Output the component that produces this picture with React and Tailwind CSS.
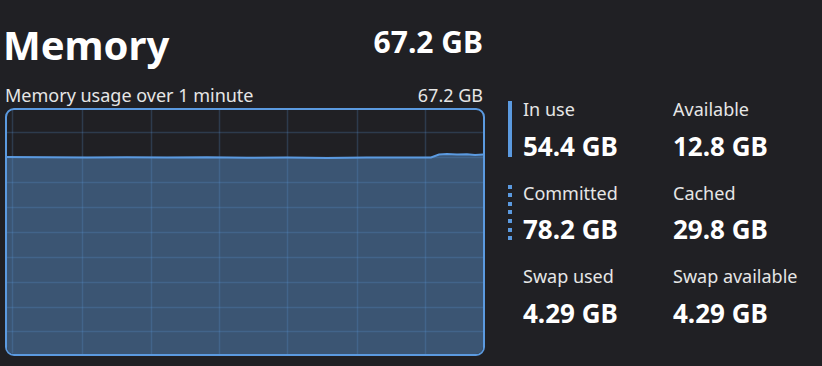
import React from 'react';

const FONT = { fontFamily: '"Noto Sans", "Open Sans", sans-serif' };

// memory history, inner chart coordinates (476 x 244)
const LINE = [
  [0, 47], [40, 47.2], [80, 47.5], [120, 47.3], [160, 47.6], [200, 47.2], [240, 47.8],
  [280, 47.5], [320, 47.9], [360, 47.6], [400, 47.6], [424, 47.4], [432, 44.5],
  [440, 44], [450, 44.6], [460, 44.2], [468, 45], [476, 44.6],
];

const Chart = () => {
  const pts = LINE.map(([x, y]) => `${x},${y}`).join(' L');
  const vLines = [5, 75, 144, 212, 280, 350, 418];
  const hLines = [22, 47, 72, 97, 122, 147, 172, 197, 221];
  return (
    <div className="mt-[4px] w-[480px] h-[248px] border-2 border-[#5b9ae0] rounded-[9px] overflow-hidden">
      <svg width="476" height="244" viewBox="0 0 476 244" className="block">
        <path d={`M${pts} L476,244 L0,244 Z`} fill="#3b5573" />
        {vLines.map((x) => (
          <line key={`v${x}`} x1={x + 0.5} y1="0" x2={x + 0.5} y2="244" stroke="#5b9ae0" strokeOpacity="0.22" strokeWidth="1.5" />
        ))}
        {hLines.map((y) => (
          <line key={`h${y}`} x1="0" y1={y + 0.5} x2="476" y2={y + 0.5} stroke="#5b9ae0" strokeOpacity="0.22" strokeWidth="1.5" />
        ))}
        <path d={`M${pts}`} fill="none" stroke="#5b9ae0" strokeWidth="2" />
      </svg>
    </div>
  );
};

const Stat = ({ label, value, marker }) => (
  <div className="flex">
    <div className="w-[15px] shrink-0 pt-[4px]">
      {marker === 'solid' && <div className="w-[4px] h-[56px] bg-[#5b9ae0]" />}
      {marker === 'dotted' && (
        <div className="flex flex-col justify-between h-[56px]">
          {[0, 1, 2, 3, 4, 5, 6].map((i) => (
            <div key={i} className="w-[4px] h-[4px] bg-[#5b9ae0]" />
          ))}
        </div>
      )}
    </div>
    <div className="flex flex-col">
      <span className="text-[18px] leading-[24px] text-[#e6e6e6]">{label}</span>
      <span className="text-[26px] leading-[30px] font-bold text-white mt-[9.5px]">{value}</span>
    </div>
  </div>
);

export default function App() {
  return (
    <div className="w-[822px] h-[366px] bg-[#202024] overflow-hidden" style={FONT}>
      <div className="flex pl-[5px]">
        <div className="w-[480px] flex flex-col">
          <div className="flex items-start justify-between h-[86px] pt-[25px]">
            <span className="text-[40px] font-bold text-white leading-none -ml-[2px]">Memory</span>
            <span className="text-[30px] font-bold text-white leading-none mt-[2px] pr-[2px]">67.2 GB</span>
          </div>
          <div className="flex justify-between items-start h-[18px] text-[18px] leading-none text-[#e6e6e6]">
            <span>Memory usage over 1 minute</span>
            <span className="pr-[2px]">67.2 GB</span>
          </div>
          <Chart />
        </div>
        <div className="ml-[23px] pt-[97px] grid grid-cols-[150px_150px] auto-rows-[83.5px]">
          <Stat label="In use" value="54.4 GB" marker="solid" />
          <Stat label="Available" value="12.8 GB" />
          <Stat label="Committed" value="78.2 GB" marker="dotted" />
          <Stat label="Cached" value="29.8 GB" />
          <Stat label="Swap used" value="4.29 GB" />
          <Stat label="Swap available" value="4.29 GB" />
        </div>
      </div>
    </div>
  );
}
